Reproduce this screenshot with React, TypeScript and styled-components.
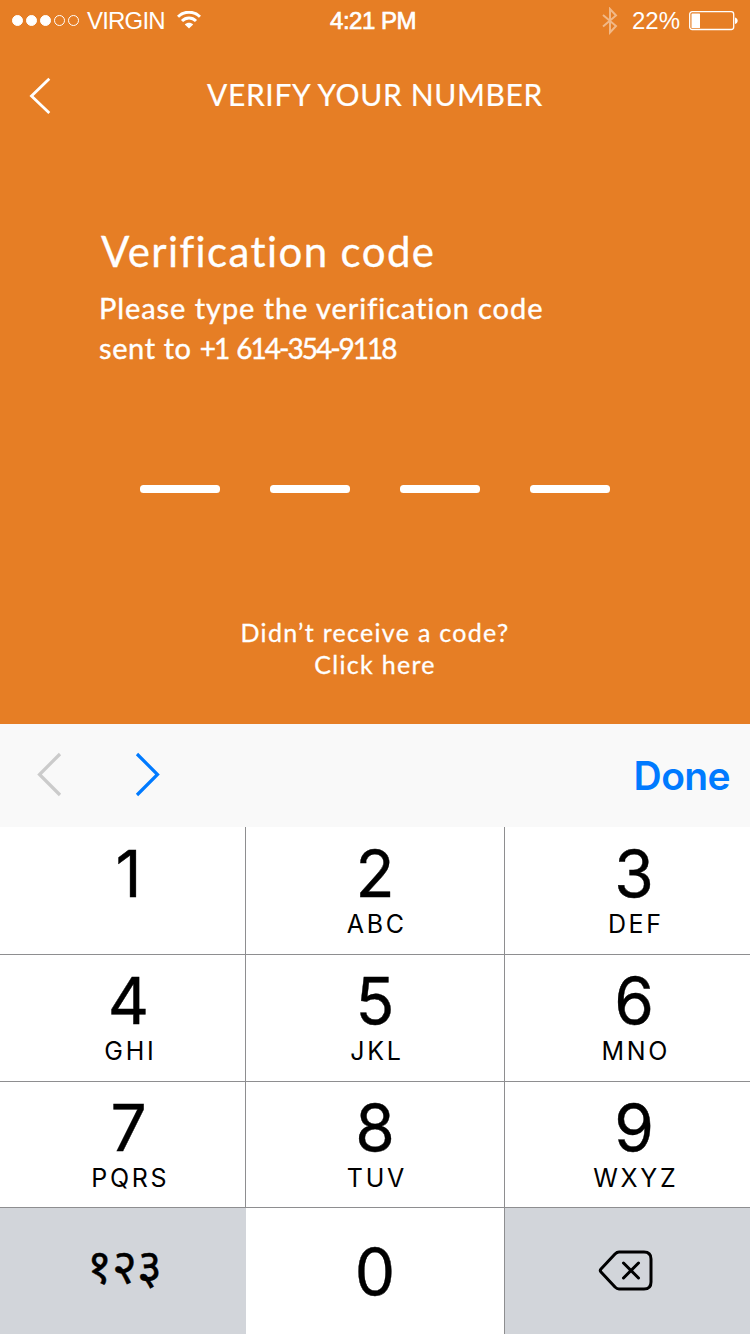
import React from "react";
import styled, { createGlobalStyle } from "styled-components";

const GlobalStyle = createGlobalStyle`
  * { box-sizing: border-box; }
  body { margin: 0; background: #e67e25; }
  button { border: 0; padding: 0; margin: 0; background: none; font: inherit; color: inherit; }
  svg { display: block; }
`;

const Screen = styled.div`
  width: 750px;
  height: 1334px;
  display: flex;
  flex-direction: column;
  overflow: hidden;
  background: #e67e25;
  color: #fff;
`;

const StatusBar = styled.div`
  height: 40px;
  flex: none;
  display: grid;
  grid-template-columns: 1fr auto 1fr;
  align-items: center;
  padding: 2px 12px 0;
  font-family: "Liberation Sans", Arial, sans-serif;
  font-size: 24px;
  line-height: 36px;
`;

const StatusGroup = styled.div<{ $end?: boolean }>`
  display: flex;
  align-items: center;
  justify-content: ${(p) => (p.$end ? "flex-end" : "flex-start")};
`;

const StatusText = styled.span<{ $spacing?: number }>`
  letter-spacing: ${(p) => p.$spacing ?? 0}px;
  white-space: nowrap;
`;

const Clock = styled(StatusText)`
  margin-right: 4px;
  -webkit-text-stroke: 0.7px #fff;
`;

const Signal = styled.div`
  display: flex;
  gap: 3px;
  margin: -2px 8px 0 0;
`;

const Dot = styled.i<{ $on?: boolean }>`
  width: 11px;
  height: 11px;
  border-radius: 50%;
  border: 1px solid #fff;
  background: ${(p) => (p.$on ? "#fff" : "transparent")};
`;

const WifiIcon = styled.svg`
  margin: -2px 0 0 12px;
`;

const BluetoothIcon = styled.svg`
  margin-right: 14px;
  opacity: 0.45;
`;

const BatteryIcon = styled.svg`
  margin-left: 9px;
  margin-right: -1px;
`;

const NavBar = styled.header`
  height: 110px;
  flex: none;
  display: grid;
  grid-template-columns: 60px 1fr 60px;
  align-items: center;
  padding-top: 1px;
`;

const BackButton = styled.button`
  padding-left: 28px;
`;

const NavTitle = styled.h1`
  margin: 0;
  padding-bottom: 4px;
  font: 400 30px/40px Lato, sans-serif;
  letter-spacing: 0.65px;
  text-align: center;
  white-space: nowrap;
  -webkit-text-stroke: 0.2px #fff;
`;

const Intro = styled.section`
  padding: 76px 0 0 99px;
  height: 335px;
  flex: none;
  font-family: Lato, sans-serif;
`;

const Heading = styled.h2`
  margin: 0 0 12px 2px;
  font-weight: 400;
  font-size: 42px;
  line-height: 50px;
  letter-spacing: 1.4px;
  -webkit-text-stroke: 0.3px #fff;
`;

const Line = styled.span<{ $spacing: number }>`
  display: block;
  letter-spacing: ${(p) => p.$spacing}px;
  white-space: nowrap;
`;

const PhoneNumber = styled.span`
  font-size: 28px;
  letter-spacing: -2px;
  word-spacing: 3px;
`;

const Message = styled.p`
  margin: 0;
  font-size: 29px;
  line-height: 40px;
  -webkit-text-stroke: 0.4px #fff;
`;

const CodeSlots = styled.div`
  flex: none;
  display: flex;
  justify-content: center;
  gap: 50px;
`;

const Slot = styled.span`
  width: 80px;
  height: 8px;
  border-radius: 3.5px;
  background: #fff;
`;

const Resend = styled.div`
  margin-top: 123px;
  text-align: center;
  font: 400 25px/32px Lato, sans-serif;
  -webkit-text-stroke: 0.3px #fff;
`;

const Keyboard = styled.div`
  margin-top: auto;
  height: 610px;
  flex: none;
  color: #000;
  font-family: Inter, sans-serif;
`;

const Accessory = styled.div`
  height: 103px;
  background: #f9f9f9;
  display: flex;
  align-items: center;
  padding: 0 20px 4px 36px;
`;

const NextButton = styled.button`
  margin-left: 72px;
`;

const DoneButton = styled.button`
  margin-left: auto;
  padding-top: 5px;
  font-size: 39px;
  line-height: 48px;
  font-weight: 600;
  letter-spacing: -0.6px;
  color: #007aff;
`;

const Keys = styled.div`
  display: grid;
  grid-template-columns: 246px 259px 245px;
  grid-template-rows: 128px 127px 126px 126px;
`;

const Key = styled.button<{ $dark?: boolean; $col: number; $row: number }>`
  display: flex;
  flex-direction: column;
  align-items: center;
  justify-content: ${(p) => (p.$row === 3 ? "center" : "flex-start")};
  padding-top: ${(p) => [11, 10, 10, 0][p.$row]}px;
  padding-left: ${(p) => [12, 0, 13][p.$col]}px;
  background: ${(p) => (p.$dark ? "#d2d5da" : "#fff")};
  border-right: ${(p) => (p.$col < 2 && !(p.$row === 3 && p.$col === 0) ? "1px solid #8e8e90" : "0")};
  border-bottom: ${(p) => (p.$row === 3 ? "0" : "1px solid #8e8e90")};
`;

const Digit = styled.span`
  font-size: 64px;
  line-height: 71px;
  -webkit-text-stroke: 0.4px #000;
`;

const Letters = styled.span`
  font-size: 25px;
  line-height: 30px;
  letter-spacing: 2.7px;
  margin-right: -3.7px;
`;

const NumeralSwitch = styled.span`
  margin: 0 9px 13px 0;
  font: 400 48px/64px "Noto Sans", "Noto Sans Devanagari", sans-serif;
  -webkit-text-stroke: 0.4px #000;
`;

const DeleteIcon = styled.svg`
  margin-right: 17px;
`;

const keys: [string, string][] = [
  ["1", ""], ["2", "ABC"], ["3", "DEF"],
  ["4", "GHI"], ["5", "JKL"], ["6", "MNO"],
  ["7", "PQRS"], ["8", "TUV"], ["9", "WXYZ"],
];

export default function App() {
  return (
    <Screen>
      <GlobalStyle />
      <StatusBar>
        <StatusGroup>
          <Signal>
            <Dot $on /><Dot $on /><Dot $on /><Dot /><Dot />
          </Signal>
          <StatusText $spacing={-0.8}>VIRGIN</StatusText>
          <WifiIcon width="24" height="18" viewBox="0 0 24 18" fill="none" stroke="#fff" strokeWidth="3">
            <path d="M1 5.8C7-.3 17-.3 23 5.8" />
            <path d="M5 10C9 6 15 6 19 10" />
            <path d="M12 17.5L7.8 13.4C10 11.3 14 11.3 16.2 13.4Z" fill="#fff" stroke="none" />
          </WifiIcon>
        </StatusGroup>
        <Clock $spacing={-0.5}>4:21 PM</Clock>
        <StatusGroup $end>
          <BluetoothIcon width="16" height="28" viewBox="0 0 16 28" fill="none" stroke="#fff" strokeWidth="2">
            <path d="M1 8L14 19L8 25.5V2L14 8.500L1 19.500" />
          </BluetoothIcon>
          <StatusText>22%</StatusText>
          <BatteryIcon width="50" height="20" viewBox="0 0 50 20">
            <rect x="0.700" y="0.700" width="44" height="17.800" rx="2.500" fill="none" stroke="#fff" strokeWidth="1.300" />
            <rect x="2.500" y="2.500" width="8.500" height="14.500" rx="0.500" fill="#fff" />
            <path d="M46 6.500C49.600 7 49.600 12.500 46 13Z" fill="#fff" />
          </BatteryIcon>
        </StatusGroup>
      </StatusBar>

      <NavBar>
        <BackButton aria-label="Back">
          <svg width="24" height="38" viewBox="0 0 24 38" fill="none" stroke="#fff" strokeWidth="2.800">
            <path d="M21.300 1.800L3.500 19L21.300 36" />
          </svg>
        </BackButton>
        <NavTitle>VERIFY YOUR NUMBER</NavTitle>
      </NavBar>

      <Intro>
        <Heading>Verification code</Heading>
        <Message>
          <Line $spacing={0.93}>Please type the verification code</Line>
          <Line $spacing={0.6}>
            sent to <PhoneNumber>+1 614-354-9118</PhoneNumber>
          </Line>
        </Message>
      </Intro>

      <CodeSlots>
        <Slot /><Slot /><Slot /><Slot />
      </CodeSlots>

      <Resend>
        <Line $spacing={1.3}>Didn’t receive a code?</Line>
        <Line $spacing={1.3}>Click here</Line>
      </Resend>

      <Keyboard>
        <Accessory>
          <button aria-label="Previous">
            <svg width="27" height="46" viewBox="0 0 27 46" fill="none" stroke="#cbcbcb" strokeWidth="3.200">
              <path d="M24 3L3.500 23.500L24 44" />
            </svg>
          </button>
          <NextButton aria-label="Next">
            <svg width="27" height="46" viewBox="0 0 27 46" fill="none" stroke="#007aff" strokeWidth="3.200">
              <path d="M2 3L22.500 23.500L2 44" />
            </svg>
          </NextButton>
          <DoneButton>Done</DoneButton>
        </Accessory>
        <Keys>
          {keys.map(([digit, letters], i) => (
            <Key key={digit} $col={i % 3} $row={Math.floor(i / 3)}>
              <Digit>{digit}</Digit>
              {letters && <Letters>{letters}</Letters>}
            </Key>
          ))}
          <Key $dark $row={3} $col={0}>
            <NumeralSwitch>१२३</NumeralSwitch>
          </Key>
          <Key $row={3} $col={1}>
            <Digit>0</Digit>
          </Key>
          <Key $dark $row={3} $col={2} aria-label="Delete">
            <DeleteIcon width="56" height="42" viewBox="0 0 56 42" fill="none" stroke="#000" strokeWidth="3" strokeLinecap="round" strokeLinejoin="round">
              <path d="M21 2H46Q53 2 53 9V32Q53 39 46 39H21Q19 39 17 37L3 22Q1.600 20.500 3 19L17 4Q19 2 21 2Z" />
              <path d="M25.500 13L40.500 28M40.500 13L25.500 28" />
            </DeleteIcon>
          </Key>
        </Keys>
      </Keyboard>
    </Screen>
  );
}
